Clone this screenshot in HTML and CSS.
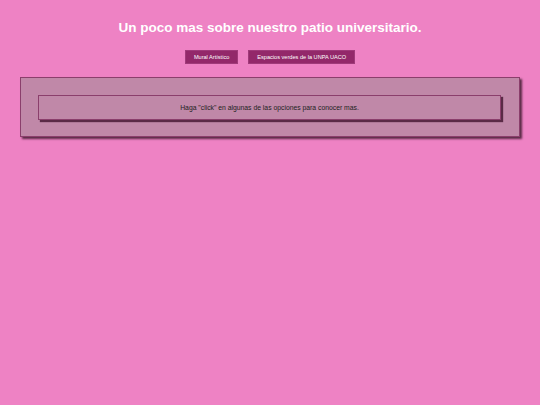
FILE: index.html
```html
<!DOCTYPE html>
<html lang="es">
<head>
<meta charset="utf-8">
<title>Patio universitario</title>
<link rel="stylesheet" href="styles.css">
</head>
<body>
<header class="header">
  <h1 class="title">Un poco mas sobre nuestro patio universitario.</h1>
  <nav class="nav">
    <button class="btn">Mural Artístico</button>
    <button class="btn">Espacios verdes de la UNPA UACO</button>
  </nav>
</header>
<main class="panel">
  <div class="message">Haga "click" en algunas de las opciones para conocer mas.</div>
</main>
</body>
</html>
```
FILE: styles.css
```css
html, body {
  margin: 0;
  padding: 0;
  background: #ee82c4;
  font-family: "Liberation Sans", Arial, sans-serif;
}
body {
  min-height: 405px;
}
.header {
  padding-top: 19px;
  text-align: center;
}
.title {
  margin: 0;
  font-size: 13.5px;
  line-height: 18px;
  font-weight: bold;
  color: #ffffff;
}
.nav {
  display: flex;
  justify-content: center;
  gap: 10px;
  margin-top: 13px;
}
.btn {
  height: 14px;
  padding: 0 8px;
  border: 1px solid #a03a7a;
  background: #93286a;
  color: #ffffff;
  font-family: "Liberation Sans", Arial, sans-serif;
  font-size: 5.6px;
  line-height: 12px;
  margin: 0;
}
.panel {
  margin: 13px 20px 0 20px;
  padding: 17px 18px 16px 17px;
  background: #c088a8;
  border: 1px solid #8b3f6c;
  box-shadow: 2px 2px 2px #5a2a46;
}
.message {
  height: 23px;
  line-height: 23px;
  text-align: center;
  font-size: 6.8px;
  color: #222;
  border: 1px solid #8b3f6c;
  box-shadow: 2px 2px 1px #5a2a46;
}
```
